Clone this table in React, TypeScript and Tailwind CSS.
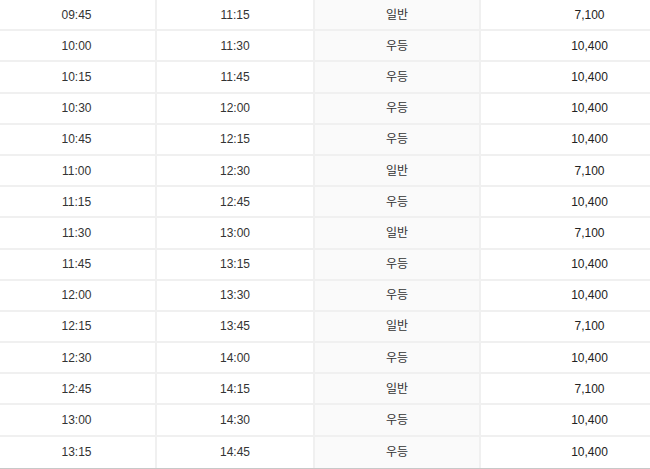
const rows: [string, string, string, string][] = [
  ['09:45', '11:15', '일반', '7,100'],
  ['10:00', '11:30', '우등', '10,400'],
  ['10:15', '11:45', '우등', '10,400'],
  ['10:30', '12:00', '우등', '10,400'],
  ['10:45', '12:15', '우등', '10,400'],
  ['11:00', '12:30', '일반', '7,100'],
  ['11:15', '12:45', '우등', '10,400'],
  ['11:30', '13:00', '일반', '7,100'],
  ['11:45', '13:15', '우등', '10,400'],
  ['12:00', '13:30', '우등', '10,400'],
  ['12:15', '13:45', '일반', '7,100'],
  ['12:30', '14:00', '우등', '10,400'],
  ['12:45', '14:15', '일반', '7,100'],
  ['13:00', '14:30', '우등', '10,400'],
  ['13:15', '14:45', '우등', '10,400'],
]

export default function App() {
  return (
    <div
      className="w-[650px] h-[469px] overflow-hidden bg-white text-[12px] text-[#333]"
      style={{ fontFamily: '"Liberation Sans", "Noto Sans CJK KR", sans-serif' }}
    >
      <div className="border-b border-[#c8c8c8]">
        {rows.map(([dep, arr, grade, price], i) => (
          <div
            key={i}
            className={`flex h-[31.2px] ${
              i < rows.length - 1 ? 'border-b-2 border-[#f0f0f0]' : ''
            }`}
          >
            <div className="w-[157px] flex items-center justify-center pr-[2px] border-r-2 border-[#f0f0f0]">
              {dep}
            </div>
            <div className="w-[158px] flex items-center justify-center border-r-2 border-[#f0f0f0]">
              {arr}
            </div>
            <div className="w-[166px] flex items-center justify-center bg-[#fafafa] border-r-2 border-[#f0f0f0]">
              {grade}
            </div>
            <div className="flex-1 flex items-center justify-center pl-[48px] text-[#222]">
              {price}
            </div>
          </div>
        ))}
      </div>
    </div>
  )
}
